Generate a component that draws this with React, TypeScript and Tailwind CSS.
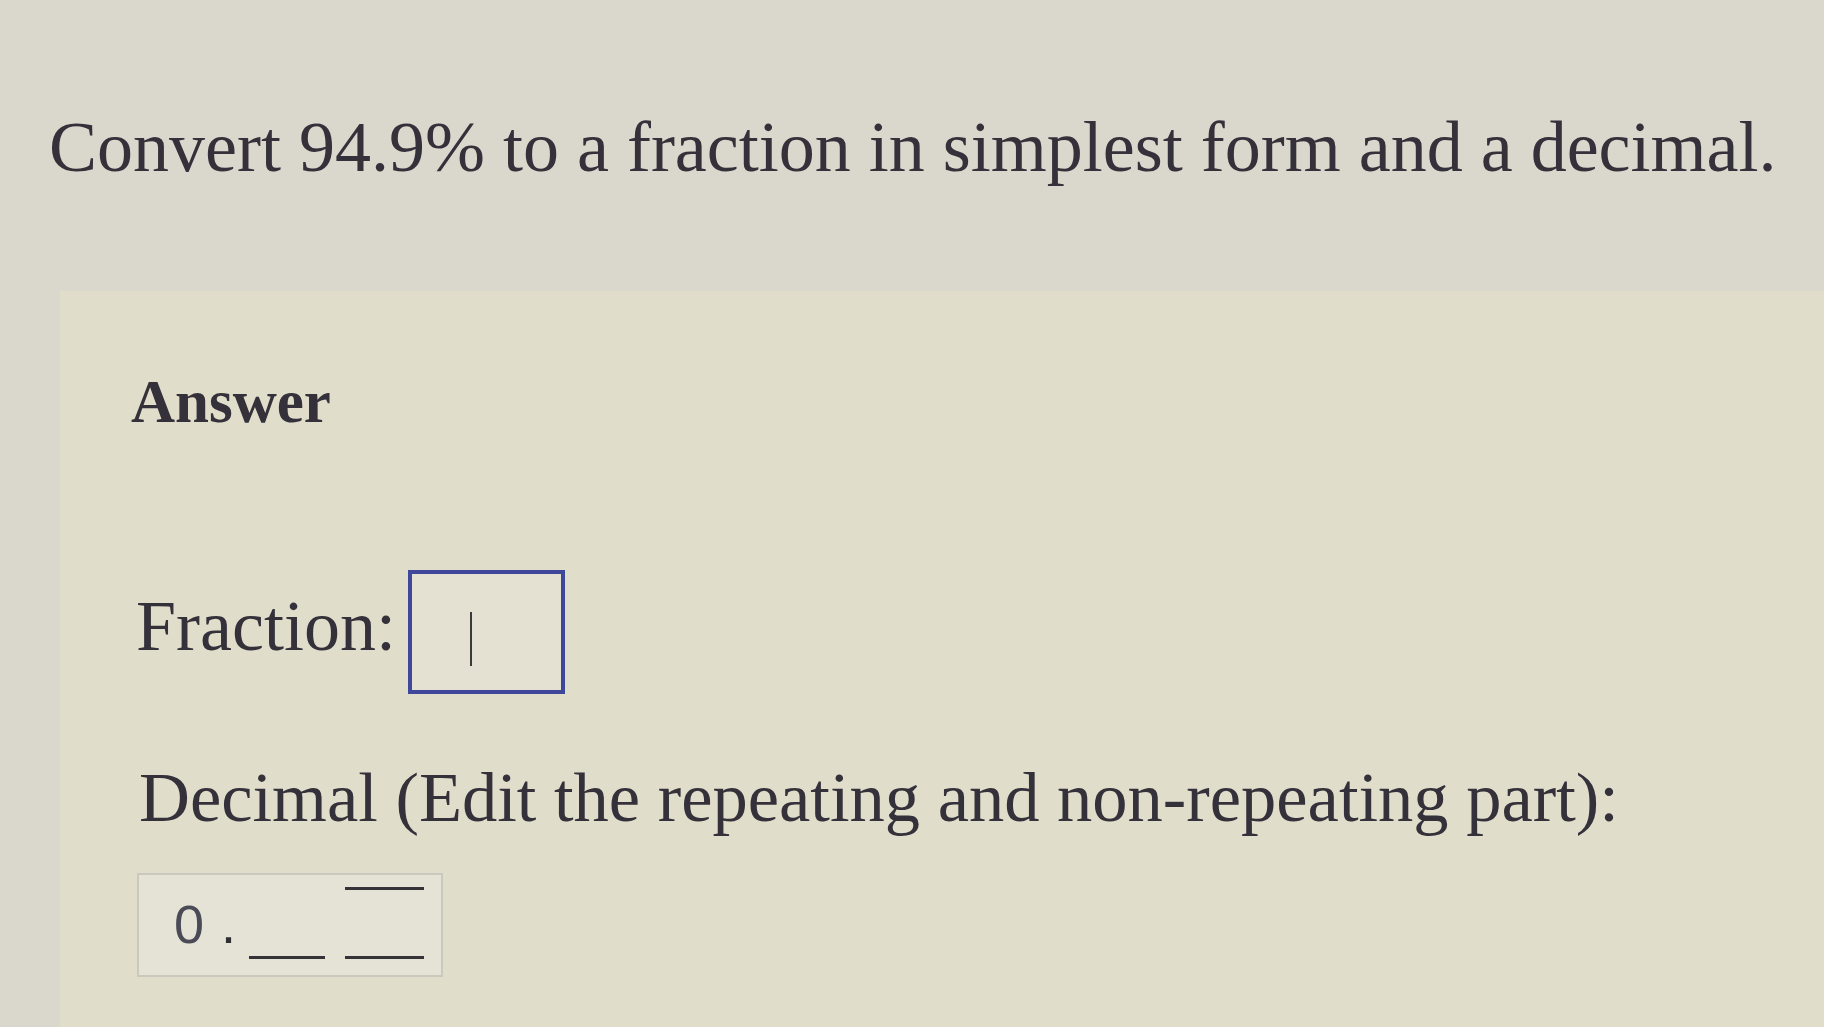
import React from 'react';

const serif = "font-['Liberation_Serif','Times_New_Roman',serif]";
const sans = "font-['Liberation_Sans',Arial,sans-serif]";

function FractionInput() {
  return (
    <div className="w-[157px] h-[124px] border-[4px] border-[#3e4799] bg-[#e4e0d2] flex items-start">
      {/* caret */}
      <div className="ml-[58px] mt-[38px] w-[2px] h-[54px] bg-[#3a3a3a]" />
    </div>
  );
}

function DecimalInput() {
  return (
    <div className="w-[306px] h-[104px] border-2 border-[#cbc8bd] bg-[#e5e2d6] flex items-start pl-[35px]">
      <span className={`${sans} text-[54px] leading-none text-[#4b4b57] mt-[22px]`}>0</span>
      <span className={`${sans} text-[54px] leading-none text-[#2e2e33] mt-[22px] ml-[17px]`}>.</span>
      <div className="ml-[13px] mt-[12px] w-[76px] h-[72px] border-b-[3px] border-[#333338]" />
      <div className="ml-[20px] mt-[12px] w-[79px] h-[72px] border-t-[3px] border-b-[3px] border-[#333338]" />
    </div>
  );
}

export default function App() {
  return (
    <div className={`w-[1824px] h-[1027px] overflow-hidden bg-[#dad7cc] text-[#35313a] ${serif} flex flex-col`}>
      <h1 className="pt-[111px] pl-[49px] text-[72px] leading-none font-normal whitespace-nowrap">
        Convert 94.9% to a fraction in simplest form and a decimal.
      </h1>

      <section className="mt-[108px] ml-[60px] flex-1 bg-[#e1ddcb] pl-[71px] pt-[80px] flex flex-col items-start">
        <h2 className="text-[61px] leading-none font-bold">Answer</h2>

        <div className="mt-[138px] pl-[5px] flex items-start">
          <span className="mt-[20px] text-[72px] leading-none">Fraction:</span>
          <div className="ml-[12px]">
            <FractionInput />
          </div>
        </div>

        <p className="mt-[68px] pl-[8px] text-[70.5px] leading-none whitespace-nowrap">
          Decimal (Edit the repeating and non-repeating part):
        </p>

        <div className="mt-[40px] -ml-[55px] pl-[61px]">
          <DecimalInput />
        </div>
      </section>
    </div>
  );
}
